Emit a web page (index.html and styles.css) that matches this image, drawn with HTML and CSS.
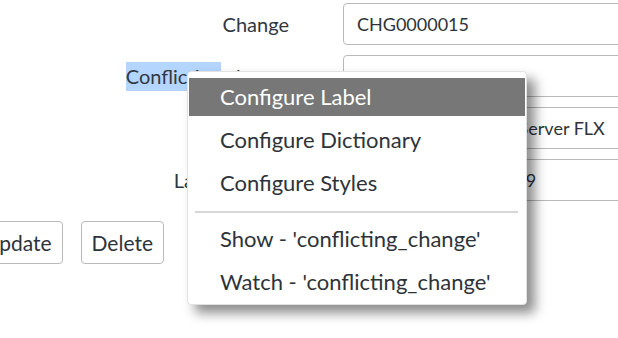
FILE: index.html
```html
<!DOCTYPE html>
<html>
<head>
<meta charset="utf-8">
<link rel="stylesheet" href="styles.css">
</head>
<body>
<div class="page">
  <div class="form">
    <div class="row">
      <span class="lbl">Change</span>
      <div class="field">CHG0000015</div>
    </div>
    <div class="row">
      <span class="lbl"><span class="sel">Conflicting</span> change</span>
      <div class="field"></div>
    </div>
    <div class="row">
      <span class="lbl">Server</span>
      <div class="field">Email Productions 1 Server FLX</div>
    </div>
    <div class="row">
      <span class="lbl">Last run time</span>
      <div class="field">2019-06-12T10:22:09</div>
    </div>
  </div>
  <div class="actions">
    <button class="btn">Update</button>
    <button class="btn">Delete</button>
  </div>
  <div class="menu">
    <div class="item active">Configure Label</div>
    <div class="item">Configure Dictionary</div>
    <div class="item">Configure Styles</div>
    <div class="sep"></div>
    <div class="item">Show - 'conflicting_change'</div>
    <div class="item">Watch - 'conflicting_change'</div>
  </div>
</div>
</body>
</html>
```
FILE: styles.css
```css
html, body {
  margin: 0;
  padding: 0;
  background: #fff;
  overflow: hidden;
}
body {
  font-family: Lato, "Liberation Sans", sans-serif;
  font-size: 20px;
  color: #2e3339;
}
.page {
  position: relative;
  width: 618px;
  height: 338px;
  overflow: hidden;
}
.form {
  display: flex;
  flex-direction: column;
  gap: 10px;
  padding-top: 3px;
}
.row {
  display: grid;
  grid-template-columns: 289px 340px;
  column-gap: 54px;
  align-items: center;
  height: 42px;
}
.lbl {
  text-align: right;
  white-space: nowrap;
  color: #2f3842;
}
.sel {
  background: #b4d5fe;
  padding: 2px 0 3px;
}
.field {
  box-sizing: border-box;
  height: 42px;
  border: 1px solid #b9b9b9;
  border-radius: 4px;
  padding: 0 13px;
  font-size: 18px;
  line-height: 40px;
  white-space: nowrap;
  color: #2e3339;
}
.actions {
  display: flex;
  gap: 18px;
  margin-top: 20px;
  margin-left: -27px;
}
.btn {
  box-sizing: border-box;
  height: 43px;
  padding: 0 10px;
  font-family: inherit;
  font-size: 21px;
  color: #2e3339;
  background: #fff;
  border: 1px solid #b9b9b9;
  border-radius: 4px;
}
.menu {
  position: absolute;
  left: 187px;
  top: 71px;
  width: 340px;
  box-sizing: border-box;
  padding: 6px 1px 3px;
  background: #fff;
  border: 1px solid #e2e2e2;
  border-radius: 4px;
  box-shadow: 8px 8px 12px rgba(0, 0, 0, 0.45);
  display: flex;
  flex-direction: column;
  gap: 5px;
  font-size: 22px;
}
.item {
  height: 38px;
  line-height: 38px;
  padding-left: 31px;
  color: #2e3339;
  white-space: nowrap;
}
.item.active {
  background: #777777;
  color: #fff;
}
.sep {
  height: 2px;
  background: #d6d6d6;
  margin: 4px 7px 2px 6px;
}
```
